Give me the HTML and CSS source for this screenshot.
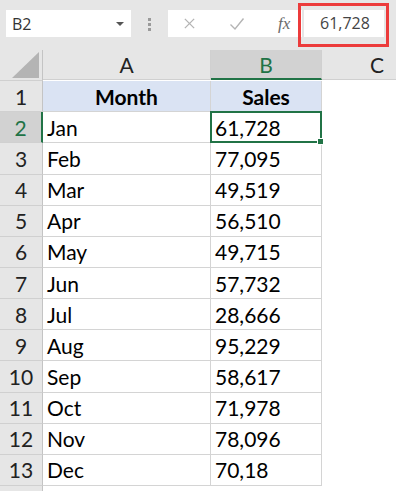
FILE: index.html
```html
<!DOCTYPE html>
<html lang="en">
<head>
    <meta charset="UTF-8">
    <meta name="viewport" content="width=device-width, initial-scale=1.0">
    <title>Sales by Month</title>
    <link rel="stylesheet" href="styles.css">
</head>
<body>
    <div class="toolbar">
        <div class="name-box">
            <span>B2</span>
            <svg class="caret" viewBox="0 0 10 6"><path d="M1 1h8L5 5z"/></svg>
        </div>
        <div class="grip"><i></i><i></i><i></i></div>
        <div class="formula-icons">
            <svg class="icon-x" viewBox="0 0 14 14"><path d="M2 2l10 10M12 2L2 12"/></svg>
            <svg class="icon-check" viewBox="0 0 16 14"><path d="M1.5 7.5l4.5 4.5L14.5 1.5"/></svg>
            <span class="fx">fx</span>
        </div>
        <div class="formula-value">61,728</div>
        <div class="highlight"></div>
    </div>

    <div class="sheet">
        <div class="corner"><svg viewBox="0 0 28 27"><path d="M28 0V27H0z"/></svg></div>
        <div class="col-head">A</div>
        <div class="col-head active">B</div>
        <div class="col-head last">C</div>

        <div class="row-head">1</div>
        <div class="cell title">Month</div>
        <div class="cell title">Sales</div>
        <div class="empty"></div>
    </div>
    <div class="sheet rows" id="rows"></div>

    <script>
        const data = [
            ['Jan', '61,728'], ['Feb', '77,095'], ['Mar', '49,519'], ['Apr', '56,510'],
            ['May', '49,715'], ['Jun', '57,732'], ['Jul', '28,666'], ['Aug', '95,229'],
            ['Sep', '58,617'], ['Oct', '71,978'], ['Nov', '78,096'], ['Dec', '70,18']
        ];
        const rows = document.getElementById('rows');

        data.forEach(([month, sales], i) => {
            const num = i + 2;
            const selected = num === 2;
            rows.insertAdjacentHTML('beforeend',
                `<div class="row-head${selected ? ' active' : ''}">${num}</div>` +
                `<div class="cell">${month}</div>` +
                `<div class="cell${selected ? ' selected' : ''}">${sales}</div>` +
                `<div class="empty"></div>`);
        });
        rows.insertAdjacentHTML('beforeend', '<div class="row-head tail"></div>');
    </script>
</body>
</html>
```

FILE: styles.css
```css
body {
    margin: 0;
    height: 491px;
    font-family: 'Lato', 'Open Sans', sans-serif;
    background-color: #fff;
    color: #000;
    overflow: hidden;
}
.toolbar {
    position: relative;
    display: flex;
    align-items: flex-start;
    height: 50px;
    padding-top: 10px;
    box-sizing: border-box;
    background-color: #e6e6e6;
}
.name-box {
    display: flex;
    align-items: center;
    justify-content: space-between;
    margin-left: 6px;
    width: 125px;
    height: 27px;
    padding: 0 6px;
    box-sizing: border-box;
    background-color: #fff;
    color: #333;
    font-family: 'Open Sans', sans-serif;
    font-size: 16px;
}
.caret {
    width: 10px;
    height: 6px;
    fill: #555;
}
.grip {
    display: flex;
    flex-direction: column;
    gap: 2px;
    margin: 8px 17px 0 17px;
}
.grip i {
    width: 3px;
    height: 3px;
    background-color: #9a9a9a;
}
.formula-icons {
    display: flex;
    align-items: center;
    width: 134px;
    height: 27px;
    background-color: #fff;
}
.icon-x {
    width: 13px;
    height: 13px;
    margin-left: 15px;
    fill: none;
    stroke: #b4b4b4;
    stroke-width: 1.4;
}
.icon-check {
    width: 16px;
    height: 14px;
    margin-left: 33px;
    fill: none;
    stroke: #b4b4b4;
    stroke-width: 1.4;
}
.fx {
    margin-left: 33px;
    font-family: 'Liberation Serif', serif;
    font-style: italic;
    font-size: 17px;
    color: #6a6a6a;
}
.formula-value {
    margin-left: 2px;
    width: 80px;
    height: 27px;
    line-height: 27px;
    padding-left: 16px;
    box-sizing: border-box;
    background-color: #fff;
    color: #444;
    font-family: 'Open Sans', sans-serif;
    font-size: 16px;
}
.highlight {
    position: absolute;
    left: 298px;
    top: 3px;
    width: 91px;
    height: 44px;
    border: 3px solid #ec3b3b;
    box-sizing: border-box;
}
.sheet {
    display: grid;
    grid-template-columns: 43px 168px 111px 1fr;
    grid-auto-rows: 31.15px;
    font-size: 21px;
}
.sheet.rows {
    grid-template-rows: repeat(12, 31.15px) 5px;
}
.corner {
    display: flex;
    align-items: flex-end;
    justify-content: flex-end;
    padding: 0 3px 2px 0;
    background-color: #e6e6e6;
    border-right: 1px solid #c4c4c4;
    border-bottom: 1px solid #d0d0d0;
}
.corner svg {
    width: 27px;
    height: 26px;
    fill: #b4b4b4;
}
.col-head {
    display: flex;
    align-items: center;
    justify-content: center;
    height: 30px;
    background-color: #e6e6e6;
    border-right: 1px solid #d0d0d0;
    border-bottom: 1px solid #d0d0d0;
    box-sizing: border-box;
    color: #222;
}
.col-head.active {
    background-color: #d2d2d2;
    border-bottom: 2px solid #217346;
    color: #217346;
}
.col-head.last {
    justify-content: flex-start;
    padding-left: 48px;
    border-right: none;
}
.row-head {
    display: flex;
    align-items: center;
    justify-content: center;
    background-color: #e6e6e6;
    border-right: 1px solid #c4c4c4;
    border-bottom: 1px solid #d0d0d0;
    color: #222;
}
.row-head.active {
    background-color: #d2d2d2;
    border-right: 2px solid #217346;
    color: #217346;
}
.row-head.tail {
    border-bottom: none;
}
.cell {
    display: flex;
    align-items: center;
    padding-left: 4px;
    border-right: 1px solid #d4d4d4;
    border-bottom: 1px solid #d4d4d4;
}
.cell.title {
    justify-content: center;
    padding-left: 0;
    background-color: #dae3f3;
    font-weight: bold;
}
.cell.selected {
    position: relative;
    border: 2px solid #217346;
    margin: -1px 0 0 -1px;
    padding-left: 3px;
}
.cell.selected::after {
    content: "";
    position: absolute;
    right: -4px;
    bottom: -4px;
    width: 5px;
    height: 5px;
    background-color: #217346;
    border: 1px solid #fff;
}
.empty {
    background-color: #fff;
}
```
